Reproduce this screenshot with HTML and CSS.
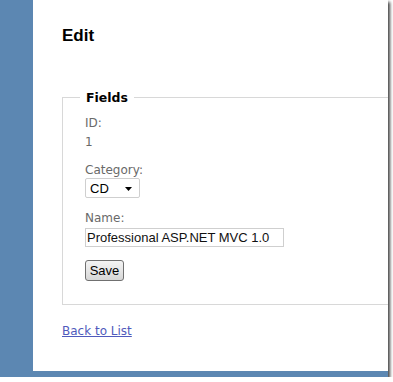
FILE: index.html
```html
<!DOCTYPE html>
<html lang="en">
<head>
    <meta charset="UTF-8">
    <meta name="viewport" content="width=device-width, initial-scale=1.0">
    <title>Edit</title>
    <link rel="stylesheet" href="styles.css">
</head>
<body>
    <div class="frame">
        <div class="page">
            <h2>Edit</h2>

            <form>
                <fieldset>
                    <legend>Fields</legend>

                    <div class="field-label">ID:</div>
                    <div class="field-value">1</div>

                    <div class="field-label spaced">Category:</div>
                    <div class="select-wrap">
                        <select class="select">
                            <option>CD</option>
                        </select>
                        <svg class="select-arrow" width="7" height="4" viewBox="0 0 7 4"><path d="M0 0h7L3.5 4z" fill="#000"/></svg>
                    </div>

                    <div class="field-label spaced">Name:</div>
                    <input class="text-box" type="text" value="Professional ASP.NET MVC 1.0">

                    <div class="actions">
                        <button type="button" class="save-btn">Save</button>
                    </div>
                </fieldset>
            </form>

            <div class="back">
                <a href="#">Back to List</a>
            </div>
        </div>
    </div>
</body>
</html>
```

FILE: styles.css
```css
html, body {
    margin: 0;
    padding: 0;
    background-color: #fff;
}
body {
    font-family: "DejaVu Sans", Verdana, sans-serif;
    font-size: 12px;
    color: #696969;
}
.frame {
    width: 388px;
    height: 377px;
    background-color: #5c87b2;
    overflow: hidden;
    box-shadow: 2px 2px 3px rgba(0, 0, 0, 0.75);
}
.page {
    margin-left: 33px;
    width: 400px;
    height: 371px;
    background-color: #fff;
    padding: 26px 0 0 29px;
    box-sizing: border-box;
}
h2 {
    margin: 0;
    font-family: "Liberation Sans", Arial, sans-serif;
    font-size: 17px;
    line-height: 20px;
    font-weight: bold;
    color: #000;
}
form {
    margin: 44px 0 0 0;
}
fieldset {
    margin: 0;
    border: 1px solid #d8d8d8;
    padding: 11px 22px 23px 22px;
}
legend {
    margin-left: -5px;
    padding: 0 6px;
    font-size: 12.5px;
    line-height: 15px;
    font-weight: bold;
    color: #000;
}
.field-label, .field-value {
    line-height: 15px;
}
.field-value {
    margin-top: 4px;
}
.field-label.spaced {
    margin-top: 13px;
}
.select-wrap {
    position: relative;
    width: 55px;
    margin-top: 0;
}
.select {
    appearance: none;
    -webkit-appearance: none;
    display: block;
    width: 55px;
    height: 20px;
    margin: 0;
    padding: 0 0 0 4px;
    border: 1px solid #cfcfcf;
    border-radius: 2px;
    background-color: #fff;
    font-family: "Liberation Sans", Arial, sans-serif;
    font-size: 13px;
    color: #000;
}
.select-arrow {
    position: absolute;
    right: 8px;
    top: 9px;
}
.text-box {
    display: block;
    width: 199px;
    height: 19px;
    margin: 2px 0 0 0;
    padding: 0 1px;
    box-sizing: border-box;
    border: 1px solid #cfcfcf;
    font-family: "Liberation Sans", Arial, sans-serif;
    font-size: 13px;
    color: #111;
}
.actions {
    margin-top: 13px;
}
.save-btn {
    display: block;
    width: 39px;
    height: 21px;
    margin: 0;
    padding: 0;
    border: 1px solid #707070;
    border-radius: 3px;
    background: linear-gradient(#f4f4f4, #e6e6e6 50%, #d6d6d6);
    font-family: "Liberation Sans", Arial, sans-serif;
    font-size: 13px;
    color: #000;
}
.back {
    margin-top: 19px;
    line-height: 15px;
}
.back a {
    color: #505abc;
    text-decoration: underline;
}
```
